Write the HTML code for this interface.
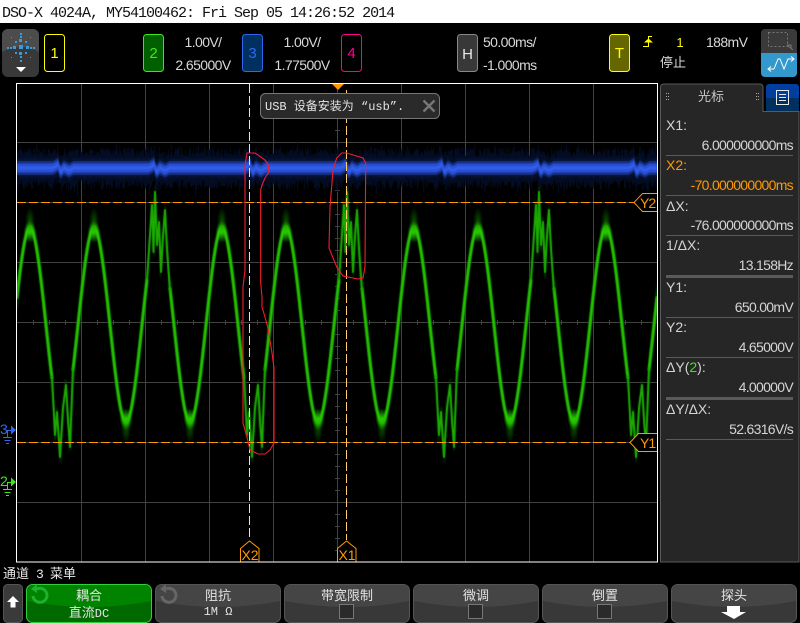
<!DOCTYPE html>
<html><head><meta charset="utf-8">
<style>
html,body{margin:0;padding:0;background:#000;width:800px;height:623px;overflow:hidden}
svg,canvas{position:absolute;left:0;top:0}
text{font-family:"Liberation Sans","WenQuanYi Zen Hei","Noto Sans CJK SC",sans-serif}
.m{font-family:"Liberation Mono","WenQuanYi Zen Hei","Noto Sans CJK SC",monospace}
.t{fill:#d8d8d8;font-size:14px;letter-spacing:-.6px}
.p{fill:#d4d4d4;font-size:14px}
.r{text-anchor:end;letter-spacing:-.7px}
.c{text-anchor:middle}
.k{fill:#e4e4e4;font-size:13px;text-anchor:middle}
</style></head><body>
<svg width="800" height="623" viewBox="0 0 800 623">
<rect width="800" height="623" fill="#000"/>
<rect width="800" height="23" fill="#fff"/>
<g stroke="#424242" stroke-width="1" shape-rendering="crispEdges" fill="none">
<path d="M81.5 84V562M145.5 84V562M209.5 84V562M273.5 84V562M337.5 84V562M401.5 84V562M465.5 84V562M529.5 84V562M593.5 84V562"/>
<path d="M17 142.5H657M17 202.5H657M17 262.5H657M17 322.5H657M17 382.5H657M17 442.5H657M17 502.5H657"/>
<path d="M335 106.5h5M335 118.5h5M335 130.5h5M335 154.5h5M335 166.5h5M335 178.5h5M335 190.5h5M335 214.5h5M335 226.5h5M335 238.5h5M335 250.5h5M335 274.5h5M335 286.5h5M335 298.5h5M335 310.5h5M335 334.5h5M335 346.5h5M335 358.5h5M335 370.5h5M335 394.5h5M335 406.5h5M335 418.5h5M335 430.5h5M335 454.5h5M335 466.5h5M335 478.5h5M335 490.5h5M335 514.5h5M335 526.5h5M335 538.5h5M335 550.5h5"/>
<path d="M33.5 320v5M49.5 320v5M65.5 320v5M97.5 320v5M113.5 320v5M129.5 320v5M161.5 320v5M177.5 320v5M193.5 320v5M225.5 320v5M241.5 320v5M257.5 320v5M289.5 320v5M305.5 320v5M321.5 320v5M353.5 320v5M369.5 320v5M385.5 320v5M417.5 320v5M433.5 320v5M449.5 320v5M481.5 320v5M497.5 320v5M513.5 320v5M545.5 320v5M561.5 320v5M577.5 320v5M609.5 320v5M625.5 320v5M641.5 320v5"/>
</g>
</svg>
<canvas id="w" width="800" height="623"></canvas>
<svg width="800" height="623" viewBox="0 0 800 623">
<text class="m" x="2" y="17" font-size="15" letter-spacing="-1" fill="#111">DSO-X 4024A, MY54100462: Fri Sep 05 14:26:52 2014</text>

<!-- logo -->
<rect x="2" y="29" width="37" height="48" rx="6" fill="#383838"/>
<path d="M2 52V35a6 6 0 0 1 6-6h25a6 6 0 0 1 6 6v17q-18 -10 -37 0z" fill="#4c4c4c"/>
<g fill="#3a9bd8">
<rect x="19" y="45" width="4" height="4"/><rect x="19" y="39" width="3" height="3"/><rect x="19" y="52" width="3" height="3"/><rect x="13" y="46" width="3" height="3"/><rect x="26" y="46" width="3" height="3"/>
<rect x="20" y="33" width="2" height="2"/><rect x="20" y="36" width="2" height="2"/><rect x="20" y="56" width="2" height="2"/><rect x="20" y="60" width="2" height="2"/>
<rect x="10" y="47" width="2" height="2"/><rect x="7" y="47" width="2" height="2"/><rect x="30" y="47" width="2" height="2"/><rect x="33" y="47" width="2" height="2"/>
<rect x="15" y="41" width="2" height="2"/><rect x="25" y="41" width="2" height="2"/><rect x="15" y="52" width="2" height="2"/><rect x="25" y="52" width="2" height="2"/>
<rect x="11" y="37" width="1" height="1"/><rect x="30" y="37" width="1" height="1"/><rect x="11" y="57" width="1" height="1"/><rect x="30" y="57" width="1" height="1"/>
</g>
<path d="M16 67h10l-5 5z" fill="#fff"/>

<!-- channel boxes -->
<rect x="44.5" y="34.5" width="20" height="37" rx="3" fill="#000" stroke="#ffff00"/>
<text x="54.5" y="58" class="c" font-size="15" fill="#ffff00">1</text>
<rect x="143.5" y="34.5" width="20" height="37" rx="3" fill="#006000" stroke="#3fe61a"/>
<text x="153.5" y="58" class="c" font-size="15" fill="#3fe61a">2</text>
<rect x="242.5" y="34.5" width="20" height="37" rx="3" fill="#003060" stroke="#2f68f0"/>
<text x="252.5" y="58" class="c" font-size="15" fill="#2f68f0">3</text>
<rect x="341.5" y="34.5" width="20" height="37" rx="3" fill="#000" stroke="#ff0090"/>
<text x="351.5" y="58" class="c" font-size="15" fill="#ff0090">4</text>
<text x="203" y="47" class="t c">1.00V/</text>
<text x="203" y="70" class="t c">2.65000V</text>
<text x="302" y="47" class="t c">1.00V/</text>
<text x="302" y="70" class="t c">1.77500V</text>
<rect x="457.5" y="34.5" width="20" height="37" rx="3" fill="#383838" stroke="#888"/>
<text x="467.5" y="59" class="c" font-size="15" fill="#e8e8e8">H</text>
<text x="483" y="47" class="t">50.00ms/</text>
<text x="483" y="70" class="t">-1.000ms</text>
<rect x="609.5" y="34.5" width="20" height="37" rx="3" fill="#666600" stroke="#ffff00"/>
<text x="619.5" y="58" class="c" font-size="15" fill="#ffff00">T</text>
<path d="M643 46.500H648.500V36.500H652" stroke="#ffff00" fill="none"/>
<path d="M644 42.500l4.500-4 4.500 4z" fill="#ffff00"/>
<text x="680" y="47" class="c" font-size="13" fill="#ffff00">1</text>
<text x="706" y="47" class="t">188mV</text>
<text x="673" y="67" class="t c" style="font-size:13px;letter-spacing:0">停止</text>
<rect x="761" y="29" width="36" height="48" rx="4" fill="#3a3a3a"/>
<path d="M761 53h36v20a4 4 0 0 1-4 4h-28a4 4 0 0 1-4-4z" fill="#3399cc"/>
<rect x="768.5" y="32.5" width="19" height="14" fill="none" stroke="#777" stroke-dasharray="2 2"/>
<path d="M787 45l6 5M787 45h4v4" stroke="#777" fill="none"/>
<path d="M768 69h6M771 66.500l-3 2.500 3 2.500M774 69l4-10h2l4 10 4-10h6M791 56.500l3 2.500-3 2.500" stroke="#fff" fill="none" stroke-width="1"/>

<!-- plot border -->
<rect x="16.5" y="83.5" width="641" height="478.5" fill="none" stroke="#fff" stroke-width="1"/>

<!-- cursors -->
<path d="M17 202.5H636M17 442.5H632" stroke="#ff9900" stroke-dasharray="9 3" shape-rendering="crispEdges"/>
<path d="M249.5 84V540" stroke="#ffe2a8" stroke-dasharray="9 3" shape-rendering="crispEdges"/>
<path d="M346.5 90V540" stroke="#ffcf70" stroke-dasharray="9 3" shape-rendering="crispEdges"/>

<!-- red curves -->
<path d="M247 153H255L258 155 265 160 268 164 269 172 265 178 262 185 260.700 190V283L262 297V307L265 317 268 328 272 353 274 368V443L270 450 265 454H258L250 450 247 437 243 423V287L245 270V165Z" fill="none" stroke="#f41c2c" stroke-width="1.1"/>
<path d="M341.700 153H346.700L363 158 365.700 163 365 267 363 278 358 279 343 276 336.700 267 329 248 330 207 333 170 336.700 158Z" fill="none" stroke="#f41c2c" stroke-width="1.1"/>

<!-- markers -->
<path d="M332 84h12l-6 6z" fill="#ff9900"/>
<path d="M240.500 561.500V548.500L249.500 541 259 548.500V561.500" fill="#000" stroke="#ff9900"/>
<text x="250" y="560" class="c" font-size="14" fill="#ff9900">X2</text>
<path d="M337.500 561.500V548.500L346.500 541 356 548.500V561.500" fill="#000" stroke="#ff9900"/>
<text x="347" y="560" class="c" font-size="14" fill="#ff9900">X1</text>
<path d="M657 193.500H642.500L634 202.500 642.500 211.500H657" fill="#000" stroke="#ff9900"/>
<text x="640" y="208" font-size="14" letter-spacing="-1" fill="#ff9900">Y2</text>
<path d="M657 433.500H638.500L630 442.500 638.500 451.500H657" fill="#000" stroke="#ff9900"/>
<text x="640" y="448" font-size="14" letter-spacing="-1" fill="#ff9900">Y1</text>

<text x="0" y="434" font-size="14" fill="#2f68f0">3</text>
<path d="M7.500 437V430.500H11" stroke="#2f68f0" fill="none"/><path d="M11 425.500l5 4.500-5 4.500z" fill="#2f68f0"/>
<path d="M3 437.500h9M4.500 440.500h6M6 443.500h3" stroke="#2f68f0" fill="none"/>
<text x="0" y="486" font-size="14" fill="#3fe61a">2</text>
<path d="M7.500 489V482.500H11" stroke="#3fe61a" fill="none"/><path d="M11 477.500l5 4.500-5 4.500z" fill="#3fe61a"/>
<path d="M3 489.500h9M4.500 492.500h6M6 495.500h3" stroke="#3fe61a" fill="none"/>

<!-- popup -->
<rect x="260.500" y="93.500" width="179" height="25" rx="5" fill="#2a2a2a" stroke="#777"/>
<text class="m" x="265" y="110" font-size="12" fill="#e4e4e4">USB 设备安装为 “usb”.</text>
<path d="M423.500 100.500l11 11M434.500 100.500l-11 11" stroke="#777" stroke-width="2.400"/>

<!-- right panel -->
<path d="M660.500 562V87a3 3 0 0 1 3-3H760a3 3 0 0 1 3 3v24.500H799V562Z" fill="#262626" stroke="#5a5a5a"/>
<path d="M766 87a3 3 0 0 1 3-3h27a3 3 0 0 1 3 3v11h-33z" fill="#003ea0"/>
<rect x="766" y="98" width="33" height="13" fill="#00305f"/>
<rect x="776.500" y="90.500" width="12" height="14" fill="none" stroke="#e8e8e8"/>
<path d="M779 94.500h7M779 97.500h7M779 100.500h7" stroke="#e8e8e8"/>
<g fill="#aaa"><rect x="666" y="93" width="1" height="1"/><rect x="668" y="93" width="1" height="1"/><rect x="666" y="96" width="1" height="1"/><rect x="668" y="96" width="1" height="1"/><rect x="666" y="99" width="1" height="1"/><rect x="668" y="99" width="1" height="1"/><rect x="756" y="93" width="1" height="1"/><rect x="758" y="93" width="1" height="1"/><rect x="756" y="96" width="1" height="1"/><rect x="758" y="96" width="1" height="1"/><rect x="756" y="99" width="1" height="1"/><rect x="758" y="99" width="1" height="1"/></g>
<text x="711" y="101" class="c" font-size="13" fill="#c8c8c8">光标</text>

<text class="p" x="666" y="130">X1:</text><text class="p r" x="793" y="150">6.000000000ms</text>
<text class="p" x="666" y="170" style="fill:#ff9900">X2:</text><text class="p r" x="793" y="190" style="fill:#ff9900">-70.000000000ms</text>
<text class="p" x="666" y="211">ΔX:</text><text class="p r" x="793" y="230">-76.000000000ms</text>
<text class="p" x="666" y="250">1/ΔX:</text><text class="p r" x="793" y="270">13.158Hz</text>
<text class="p" x="666" y="292">Y1:</text><text class="p r" x="793" y="312">650.00mV</text>
<text class="p" x="666" y="332">Y2:</text><text class="p r" x="793" y="352">4.65000V</text>
<text class="p" x="666" y="372">ΔY(<tspan fill="#3fe61a">2</tspan>):</text><text class="p r" x="793" y="392">4.00000V</text>
<text class="p" x="666" y="414">ΔY/ΔX:</text><text class="p r" x="793" y="434">52.6316V/s</text>
<g stroke="#5a5a5a" shape-rendering="crispEdges">
<path d="M666 155.500H793M666 195.500H793M666 235.500H793M666 317.500H793M666 357.500H793M666 439.500H793"/>
</g>
<rect x="666" y="275" width="127" height="3" fill="#5a5a5a"/>
<rect x="666" y="397" width="127" height="3" fill="#5a5a5a"/>

<!-- bottom -->
<text x="3" y="578" font-size="13" fill="#e8e8e8">通道</text>
<text class="m" x="36" y="578" font-size="13" fill="#e8e8e8">3</text>
<text x="50" y="578" font-size="13" fill="#e8e8e8">菜单</text>

<rect x="3.500" y="584.500" width="19" height="38" rx="4" fill="#3a3a3a" stroke="#555"/>
<path d="M13 596l6 6h-3.500v5.500h-5V602H7z" fill="#fff"/>

<g>
<rect x="26.500" y="584.500" width="125" height="38" rx="6" fill="#006a00" stroke="#2fd040"/>
<path d="M27 601V591a6 6 0 0 1 6-6h112a6 6 0 0 1 6 6v10q-62 12-124 0z" fill="#008400"/>
<path d="M33 596a7 7 0 1 0 4-7" fill="none" stroke="#1fb030" stroke-width="3"/><path d="M37 584l0 9-6-4z" fill="#1fb030"/>
<text class="k" x="89" y="600">耦合</text>
<text class="k" x="89" y="617">直流<tspan font-size="12" style="font-family:'Liberation Mono',monospace">DC</tspan></text>
</g>
<g>
<rect x="155.500" y="584.500" width="125" height="38" rx="6" fill="#383838" stroke="#555"/>
<path d="M156 601V591a6 6 0 0 1 6-6h112a6 6 0 0 1 6 6v10q-62 12-124 0z" fill="#454545"/>
<path d="M162 596a7 7 0 1 0 4-7" fill="none" stroke="#666" stroke-width="3"/><path d="M166 584l0 9-6-4z" fill="#666"/>
<text class="k" x="218" y="600">阻抗</text>
<text class="m k" x="218" y="615" style="font-size:12px">1M Ω</text>
</g>
<g>
<rect x="284.500" y="584.500" width="125" height="38" rx="6" fill="#383838" stroke="#555"/>
<path d="M285 601V591a6 6 0 0 1 6-6h112a6 6 0 0 1 6 6v10q-62 12-124 0z" fill="#454545"/>
<text class="k" x="347" y="600">带宽限制</text>
<rect x="339.500" y="604.500" width="14" height="14" fill="#2a2a2a" stroke="#777"/>
</g>
<g>
<rect x="413.500" y="584.500" width="125" height="38" rx="6" fill="#383838" stroke="#555"/>
<path d="M414 601V591a6 6 0 0 1 6-6h112a6 6 0 0 1 6 6v10q-62 12-124 0z" fill="#454545"/>
<text class="k" x="476" y="600">微调</text>
<rect x="468.500" y="604.500" width="14" height="14" fill="#2a2a2a" stroke="#777"/>
</g>
<g>
<rect x="542.500" y="584.500" width="125" height="38" rx="6" fill="#383838" stroke="#555"/>
<path d="M543 601V591a6 6 0 0 1 6-6h112a6 6 0 0 1 6 6v10q-62 12-124 0z" fill="#454545"/>
<text class="k" x="605" y="600">倒置</text>
<rect x="597.500" y="604.500" width="14" height="14" fill="#2a2a2a" stroke="#777"/>
</g>
<g>
<rect x="671.500" y="584.500" width="125" height="38" rx="6" fill="#383838" stroke="#555"/>
<path d="M672 601V591a6 6 0 0 1 6-6h112a6 6 0 0 1 6 6v10q-62 12-124 0z" fill="#454545"/>
<text class="k" x="734" y="600">探头</text>
<path d="M727 606h13v6h6l-12 7-13-7h6z" fill="#fff"/>
</g>
</svg>
<script>
(function(){
var cv=document.getElementById('w'),g=cv.getContext('2d');
var s=12345;function R(){s=(s*1664525+1013904223)%4294967296;return s/4294967296;}
function N(){return R()+R()+R()+R()-2;}
g.save();g.beginPath();g.rect(17,84,640,478);g.clip();

// blue trace
function by(x){var d=((x-57)%96+96)%96,o=0;
 if(d<2)o=-3.5*(1-d/2);else if(d<6)o=3.5*(1-Math.abs(d-3.5)/2.5);else if(d>91)o=-(d-91)/2;
 if(d>7&&d<16)o+=2.5*(1-Math.abs(d-11.5)/4.5);return 168+o;}
for(var x=17;x<657;x++){
 var u=12+R()*9+(R()<.08?R()*6:0),v=12+R()*10+(R()<.08?R()*8:0);
 g.fillStyle='rgb(4,12,34)';g.fillRect(x,by(x)-u,1,u+v);
 g.fillStyle='rgb(6,18,52)';g.fillRect(x,by(x)-9-R()*2,1,19+R()*2);
}
for(x=17;x<657;x++){var y=by(x);
 g.fillStyle='#16307f';g.fillRect(x,y-7,1,14);
 g.fillStyle='#2a4fd6';g.fillRect(x,y-4.5,1,9);
 g.fillStyle='#3160ea';g.fillRect(x,y-1.5,1,3);
}

// green trace
var PK=[158,350,542],TR=[62,254,446,638];
var NP=[30,94,222,286,414,478,606],NT=[126,190,318,382,510,574];
var pp=[[147,280],[152,205],[153.5,252],[155,192],[157,245],[159,222],[161,272],[163,236],[165,210],[167,248],[170,292]];
var tp=[[52,376],[55,435],[57,412],[60,457],[63,408],[66,385],[68,420],[70,447],[73,368]];
function f(x,ph){var th=(x-30+ph)/64;th-=Math.floor(th);var c=Math.cos(2*Math.PI*th);var d=th>.5?1-th:th;return .88*c+.12*(1-4*d);}
// smooth arcs only, leaving gaps at the glitch windows
function smooth(a,ph){
 g.beginPath();var pen=false;
 for(var x=17;x<=657;x++){
  var gl=false,i;
  for(i=0;i<PK.length;i++)if(x>PK[i]-11&&x<PK[i]+12)gl=true;
  for(i=0;i<TR.length;i++)if(x>TR[i]-10&&x<TR[i]+11)gl=true;
  if(gl){pen=false;continue;}
  var Y=325-a*f(x,ph);
  if(pen)g.lineTo(x,Y);else{g.moveTo(x,Y);pen=true;}
 }
 g.stroke();
}
function glitch(j){
 g.beginPath();
 function run(pts,off){for(var i=0;i<pts.length;i++){var X=pts[i][0]+off+(R()-.5)*j,Y=pts[i][1]+(R()-.5)*j*5;if(i)g.lineTo(X,Y);else g.moveTo(X,Y);}}
 PK.forEach(function(c){run(pp,c-158);});
 TR.forEach(function(c){run(tp,c-62);});
 g.stroke();
}
g.lineJoin='round';g.lineCap='round';
g.strokeStyle='rgba(12,85,0,0.09)';g.lineWidth=2.5;
for(var t=0;t<30;t++)smooth(100+N()*4,N()*1.2);
g.lineWidth=1.5;for(t=0;t<24;t++)glitch(3);
g.strokeStyle='#18a400';g.lineWidth=3.2;smooth(99,0);
g.strokeStyle='#2cc400';g.lineWidth=1.6;smooth(99,0);
g.strokeStyle='#1caa00';g.lineWidth=1.9;glitch(0);

// soft peak / trough blooms
function bloom(c,cy,rx,ry,col){
 g.save();g.translate(c,cy);g.scale(rx,ry);
 var r=g.createRadialGradient(0,0,0,0,0,1);r.addColorStop(0,col);r.addColorStop(1,col.replace(/[\d.]+\)$/,'0)'));
 g.fillStyle=r;g.beginPath();g.arc(0,0,1,0,7);g.fill();g.restore();
}
NP.forEach(function(c){
 bloom(c,222,5,15,'rgba(12,90,0,0.9)');
 bloom(c,232,6.5,11,'rgba(44,215,0,1)');
});
NT.forEach(function(c){
 bloom(c,428,5,15,'rgba(12,90,0,0.9)');
 bloom(c,419,6.5,11,'rgba(44,215,0,1)');
});
g.restore();
})();
</script>
</body></html>
